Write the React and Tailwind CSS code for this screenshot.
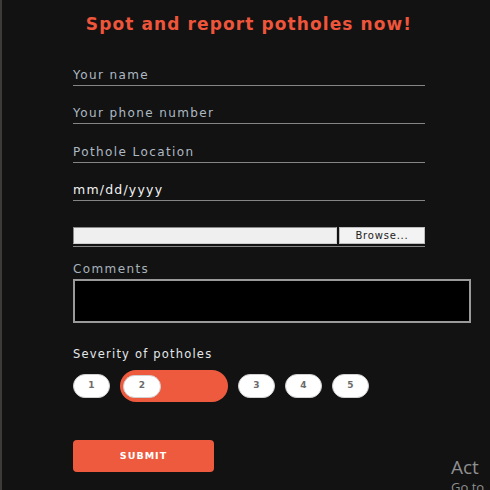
import React from "react";

const font = { fontFamily: '"DejaVu Sans", "Noto Sans", sans-serif' };

const Field = ({ label, className, light }) => (
  <div
    className={`h-[24px] flex items-end pb-[3px] border-b border-[#858585] ${className}`}
  >
    <span
      className={
        light
          ? "text-[12.5px] leading-[14px] text-[#f2f2f2] tracking-[1.2px]"
          : "text-[12px] leading-[14px] text-[#aeb9c4] tracking-[1.4px]"
      }
    >
      {label}
    </span>
  </div>
);

const Dot = ({ n }) => (
  <div className="w-[37px] h-[24px] rounded-full bg-white border border-[#d0d0d0] flex items-center justify-center text-[9px] font-bold text-[#6b6b6b]">
    {n}
  </div>
);

export default function App() {
  return (
    <div
      className="relative w-[490px] h-[490px] overflow-hidden bg-[#121212] border-l-2 border-[#3e3a3a]"
      style={font}
    >
      <h1 className="pt-[14px] pl-[6px] text-center text-[17px] leading-[20px] font-bold text-[#ef553a] tracking-[1.1px]">
        Spot and report potholes now!
      </h1>

      <form className="pl-[71px] mt-[28px]">
        <div className="w-[352px]">
          <Field label="Your name" />
          <Field label="Your phone number" className="mt-[14px]" />
          <Field label="Pothole Location" className="mt-[15px]" />
          <Field label="mm/dd/yyyy" className="mt-[14px]" light />

          <div className="mt-[26px] pb-[2px] border-b border-[#858585]">
            <div className="flex h-[17px] gap-[2px]">
              <div className="w-[264px] bg-[#efefef] border border-[#8a8a8a] border-b-[#cfcfcf] border-r-[#cfcfcf]" />
              <div className="flex-1 bg-[#f3f3f3] border border-[#bdbdbd] flex items-center justify-center text-[10px] tracking-[0.8px] text-[#222]">
                Browse...
              </div>
            </div>
          </div>
        </div>

        <div className="mt-[15px] text-[12px] leading-[14px] text-[#a7b2bc] tracking-[1.4px]">
          Comments
        </div>
        <div className="mt-[3px] w-[398px] h-[44px] bg-black border-2 border-[#9a9a9a]" />

        <div className="mt-[24px] text-[11.5px] leading-[14px] text-[#e4e7ea] tracking-[1.2px]">
          Severity of potholes
        </div>

        <div className="mt-[9px] flex items-center gap-[10px]">
          <Dot n="1" />
          <div className="w-[108px] h-[32px] rounded-full bg-[#ee5a3e] flex items-center pl-[3px]">
            <div className="w-[38px] h-[23px] rounded-full bg-white border border-[#d0d0d0] flex items-center justify-center text-[9px] font-bold text-[#6b6b6b]">
              2
            </div>
          </div>
          <Dot n="3" />
          <div className="flex gap-[10px]">
            <Dot n="4" />
            <Dot n="5" />
          </div>
        </div>

        <button
          type="button"
          className="mt-[38px] w-[141px] h-[32px] rounded-[4px] bg-[#ee5a3e] text-white text-[9.5px] font-bold tracking-[1px]"
        >
          SUBMIT
        </button>
      </form>

      <div
        className="absolute left-[449px] top-[455px] text-[#8f8f8f] whitespace-nowrap"
        style={{ fontFamily: '"Open Sans", sans-serif' }}
      >
        <div className="text-[19px] leading-[25px]">Act</div>
        <div className="text-[13px] leading-[14px]">Go to</div>
      </div>
    </div>
  );
}
